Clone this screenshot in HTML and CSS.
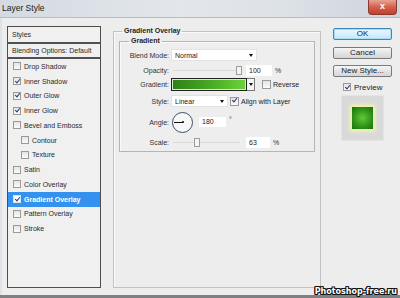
FILE: index.html
```html
<!DOCTYPE html>
<html lang="en">
<head>
    <meta charset="UTF-8">
    <title>Layer Style</title>
    <link rel="stylesheet" href="styles.css">
</head>
<body>
<div class="dialog">
    <div class="titlebar">
        <span class="title">Layer Style</span>
        <span class="close">x</span>
    </div>
    <div class="body">
        <div class="styles-list">
            <div class="list-head first">Styles</div>
            <div class="list-head">Blending Options: Default</div>
            <div class="item"><span class="cb"></span>Drop Shadow</div>
            <div class="item"><span class="cb on"></span>Inner Shadow</div>
            <div class="item"><span class="cb on"></span>Outer Glow</div>
            <div class="item"><span class="cb on"></span>Inner Glow</div>
            <div class="item"><span class="cb"></span>Bevel and Emboss</div>
            <div class="item sub"><span class="cb"></span>Contour</div>
            <div class="item sub"><span class="cb"></span>Texture</div>
            <div class="item"><span class="cb"></span>Satin</div>
            <div class="item"><span class="cb"></span>Color Overlay</div>
            <div class="item selected"><span class="cb on"></span>Gradient Overlay</div>
            <div class="item"><span class="cb"></span>Pattern Overlay</div>
            <div class="item"><span class="cb"></span>Stroke</div>
        </div>

        <fieldset class="group outer">
            <legend>Gradient Overlay</legend>
            <fieldset class="group inner">
                <legend>Gradient</legend>
                <div class="row r-blend">
                    <label>Blend Mode:</label>
                    <div class="select blend">Normal<span class="arrow"></span></div>
                </div>
                <div class="row r-opacity">
                    <label>Opacity:</label>
                    <div class="slider"><span class="thumb" style="left: 98%"></span></div>
                    <div class="num">100</div>
                    <span class="unit">%</span>
                </div>
                <div class="row r-gradient">
                    <label>Gradient:</label>
                    <div class="grad-bar"></div>
                    <div class="grad-drop"><span class="arrow"></span></div>
                    <span class="cb reverse"></span>
                    <span class="opt">Reverse</span>
                </div>
                <div class="row r-style">
                    <label>Style:</label>
                    <div class="select style">Linear<span class="arrow"></span></div>
                    <span class="cb on align"></span>
                    <span class="opt">Align with Layer</span>
                </div>
                <div class="row r-angle">
                    <label>Angle:</label>
                    <div class="dial"><span class="hand"></span><span class="dot"></span></div>
                    <div class="num angle">180</div>
                    <span class="deg">°</span>
                </div>
                <div class="row r-scale">
                    <label>Scale:</label>
                    <div class="slider"><span class="thumb" style="left: 36%"></span></div>
                    <div class="num scale">63</div>
                    <span class="unit">%</span>
                </div>
            </fieldset>
        </fieldset>

        <div class="buttons">
            <div class="btn default">OK</div>
            <div class="btn cancel">Cancel</div>
            <div class="btn newstyle">New Style...</div>
            <div class="preview-check"><span class="cb on"></span>Preview</div>
            <div class="swatch"><div class="swatch-fill"></div></div>
        </div>
    </div>
    <div class="watermark">Photoshop-free.ru</div>
</div>
</body>
</html>
```

FILE: styles.css
```css
body {
    margin: 0;
    width: 400px;
    height: 298px;
    overflow: hidden;
    font-family: "Liberation Sans", Arial, sans-serif;
    background: #ededed;
}
.dialog {
    position: relative;
    height: 298px;
    display: flex;
    flex-direction: column;
    box-sizing: border-box;
    border-bottom: 3px solid #7d8184;
    background: #ededed;
}
.titlebar {
    height: 18px;
    flex: none;
    display: flex;
    align-items: flex-start;
    box-sizing: border-box;
    border-bottom: 1px solid #b4bcc4;
    background: linear-gradient(to right, #d3dae1, #e3e7eb 45%, #dde2e7 70%, #cdd4db);
}
.title {
    padding-left: 2px;
    line-height: 16px;
    font-size: 8.5px;
    color: #1c1c1c;
}
.close {
    margin-left: auto;
    margin-right: 3px;
    width: 29px;
    height: 15px;
    line-height: 13px;
    text-align: center;
    color: #fff;
    font-weight: bold;
    font-size: 9px;
    border: 1px solid #8c3a30;
    border-top: none;
    border-radius: 0 0 4px 4px;
    box-sizing: border-box;
    background: linear-gradient(#e9a394, #d4604c 50%, #c2412c);
}
.body {
    flex: 1;
    display: flex;
    align-items: flex-start;
    gap: 12px;
    padding: 8px 0 0 5px;
    border-left: 2px solid #dde3e9;
}

/* left list */
.styles-list {
    width: 94px;
    height: 262px;
    box-sizing: border-box;
    border: 1px solid #4e4e4e;
    background: #f0f0f0;
    font-size: 7px;
    color: #2a2a2a;
}
.list-head {
    height: 13px;
    line-height: 13px;
    padding-left: 4px;
    border-bottom: 2px solid #505050;
}
.list-head.first {
    height: 15px;
    line-height: 15px;
}
.item {
    height: 14.75px;
    display: flex;
    align-items: center;
    padding-left: 5px;
}
.item.sub {
    padding-left: 13px;
}
.item.selected {
    background: #3492ee;
    color: #fff;
    font-weight: bold;
}
.cb {
    position: relative;
    flex: none;
    width: 6px;
    height: 6px;
    margin-right: 3px;
    border: 1px solid #9a9a9a;
    background: linear-gradient(#e4e4e4, #fbfbfb);
}
.cb.on::after {
    content: "";
    position: absolute;
    left: 1.5px;
    top: -0.5px;
    width: 2px;
    height: 4px;
    border-right: 1px solid #2b3b73;
    border-bottom: 1px solid #2b3b73;
    transform: rotate(40deg);
}
.selected .cb {
    background: #fff;
    border-color: #d0e4f8;
}

/* middle group */
.group {
    margin: 0;
    min-width: 0;
    box-sizing: border-box;
    border: 1px solid #c2c2c2;
    box-shadow: inset 1px 1px 0 #fafafa;
}
.group legend {
    padding: 0 2px;
    line-height: 10px;
    font-size: 7px;
    font-weight: bold;
    color: #1e1e1e;
}
.outer {
    width: 208px;
    height: 262px;
    padding: 0 5px;
}
.outer > legend {
    margin-left: 3px;
}
.inner {
    padding: 1px 0 0;
    border-color: #b5b5b5;
    background: #eeeeee;
}
.inner > legend {
    margin-left: 9px;
}
.row {
    display: flex;
    align-items: center;
    font-size: 7px;
    color: #333;
}
.row label {
    width: 49px;
    margin-right: 2px;
    text-align: right;
}
.r-blend { height: 16px; }
.r-opacity { height: 14px; }
.r-gradient { height: 14px; }
.r-style { height: 20px; }
.r-angle { height: 22px; }
.r-scale { height: 18px; }

.select {
    position: relative;
    height: 12px;
    line-height: 12px;
    padding-left: 3px;
    box-sizing: border-box;
    background: #fff;
    border: 1px solid #e2e2e2;
    color: #222;
}
.select.blend { width: 86px; }
.select.style { width: 57px; }
.arrow {
    position: absolute;
    right: 3px;
    top: 4px;
    border-left: 2.5px solid transparent;
    border-right: 2.5px solid transparent;
    border-top: 3px solid #111;
}
.slider {
    position: relative;
    width: 67px;
    height: 10px;
    margin-left: 2px;
    background: linear-gradient(#d8d8d8, #d8d8d8) center / 100% 1px no-repeat;
}
.thumb {
    position: absolute;
    top: 1px;
    width: 4px;
    height: 7px;
    transform: translateX(-50%);
    border: 1px solid #9c9c9c;
    background: #f4f4f4;
}
.num {
    width: 26px;
    height: 11px;
    line-height: 11px;
    margin-left: 6px;
    padding-left: 3px;
    box-sizing: border-box;
    background: #fff;
    color: #222;
}
.num.scale { width: 24px; }
.num.angle {
    width: 27px;
    height: 10px;
    line-height: 10px;
    margin-left: 6px;
}
.unit {
    margin-left: 3px;
}
.deg {
    align-self: flex-start;
    margin-top: 5px;
    margin-left: 3px;
}
.grad-bar {
    width: 76px;
    height: 13px;
    box-sizing: border-box;
    border: 1px solid #222;
    box-shadow: inset 0 0 0 1px #d7e8d0;
    background: linear-gradient(to right, #2f7f16, #47a822 50%, #6cd33a);
}
.grad-drop {
    position: relative;
    width: 8px;
    height: 13px;
    box-sizing: border-box;
    border: 1px solid #777;
    border-left: none;
    background: #f4f4f4;
}
.grad-drop .arrow {
    right: 1px;
    top: 4px;
}
.cb.reverse {
    margin-left: 7px;
    width: 7px;
    height: 7px;
}
.cb.align {
    margin-left: 2px;
    width: 7px;
    height: 7px;
}
.opt {
    margin-left: -1px;
    color: #222;
}
.dial {
    position: relative;
    width: 21px;
    height: 21px;
    margin-left: 1px;
    box-sizing: border-box;
    border: 1px solid #3d4b6b;
    border-radius: 50%;
    background: #f7f7f7;
}
.hand {
    position: absolute;
    left: 1px;
    top: 9px;
    width: 9px;
    height: 1px;
    background: #111;
}
.dot {
    position: absolute;
    left: 9px;
    top: 8px;
    width: 2px;
    height: 2px;
    border-radius: 50%;
    background: #111;
}

/* right column */
.buttons {
    width: 59px;
    display: flex;
    flex-direction: column;
    font-size: 8px;
    color: #222;
}
.btn {
    height: 12px;
    line-height: 10px;
    text-align: center;
    box-sizing: border-box;
    border: 1px solid #7a7a7a;
    border-radius: 2px;
    background: linear-gradient(#f6f6f6, #e4e4e4 50%, #d6d6d6);
}
.btn.default {
    margin-top: 2px;
    border-color: #3a88bd;
    box-shadow: inset 0 0 0 1px #a9dcf5;
    background: linear-gradient(#eaf6fd, #d9f0fc 50%, #bee6fd);
}
.btn.cancel { margin-top: 7px; }
.btn.newstyle { margin-top: 6px; }
.preview-check {
    height: 8px;
    margin-top: 6px;
    padding-left: 10px;
    display: flex;
    align-items: center;
}
.preview-check .cb {
    width: 6px;
    height: 6px;
    margin-right: 3px;
}
.swatch {
    width: 43px;
    height: 46px;
    margin: 4px 0 0 8px;
    display: flex;
    align-items: center;
    justify-content: center;
    background: #d9d9d9;
    border: 1px solid #e4e4e4;
    box-sizing: border-box;
}
.swatch-fill {
    width: 21px;
    height: 22px;
    background: radial-gradient(circle, #5fc935, #2e9218 60%, #1d6d0c);
    box-shadow: 0 0 2px 1px #eef58c, 0 0 4px 2px #f3f7c4;
}

.watermark {
    position: absolute;
    right: 3px;
    bottom: -2px;
    font-family: "DejaVu Sans", sans-serif;
    font-size: 8px;
    font-weight: bold;
    line-height: 10px;
    color: #fff;
    text-shadow: 1px 0 0 #111, -1px 0 0 #111, 0 1px 0 #111, 0 -1px 0 #111, 1px 1px 0 #111, -1px -1px 0 #111, 1px -1px 0 #111, -1px 1px 0 #111;
}
```
